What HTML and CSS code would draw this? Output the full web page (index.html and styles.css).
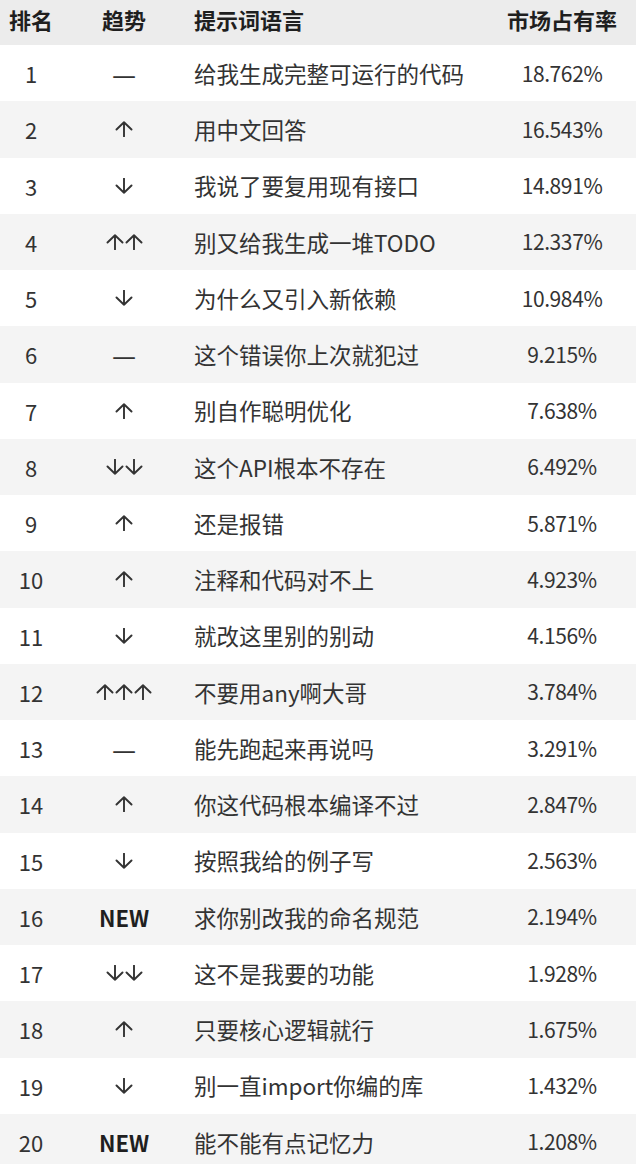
FILE: index.html
```html
<!DOCTYPE html>
<html lang="zh-CN">
<head>
<meta charset="utf-8">
<title>提示词语言排行</title>
<link rel="stylesheet" href="styles.css">
</head>
<body>
<svg width="0" height="0" class="defs">
  <defs>
    <symbol id="up" viewBox="0 0 18 16"><path d="M1.5 8.5 L9 1.2 L16.5 8.5 M9 1.2 V15.5" fill="none" stroke="#333" stroke-width="1.9" stroke-linecap="round" stroke-linejoin="round"/></symbol>
    <symbol id="down" viewBox="0 0 18 16"><path d="M1.5 7.5 L9 14.8 L16.5 7.5 M9 14.8 V0.5" fill="none" stroke="#333" stroke-width="1.9" stroke-linecap="round" stroke-linejoin="round"/></symbol>
  </defs>
</svg>
<div class="table">
  <div class="row head">
    <div class="c rank">排名</div>
    <div class="c trend">趋势</div>
    <div class="c prompt">提示词语言</div>
    <div class="c share">市场占有率</div>
  </div>
  <div class="row odd"><div class="c rank">1</div><div class="c trend"><span class="dash">—</span></div><div class="c prompt">给我生成完整可运行的代码</div><div class="c share">18.762%</div></div>
  <div class="row even"><div class="c rank">2</div><div class="c trend"><svg class="ar"><use href="#up"/></svg></div><div class="c prompt">用中文回答</div><div class="c share">16.543%</div></div>
  <div class="row odd"><div class="c rank">3</div><div class="c trend"><svg class="ar"><use href="#down"/></svg></div><div class="c prompt">我说了要复用现有接口</div><div class="c share">14.891%</div></div>
  <div class="row even"><div class="c rank">4</div><div class="c trend"><svg class="ar"><use href="#up"/></svg><svg class="ar"><use href="#up"/></svg></div><div class="c prompt">别又给我生成一堆TODO</div><div class="c share">12.337%</div></div>
  <div class="row odd"><div class="c rank">5</div><div class="c trend"><svg class="ar"><use href="#down"/></svg></div><div class="c prompt">为什么又引入新依赖</div><div class="c share">10.984%</div></div>
  <div class="row even"><div class="c rank">6</div><div class="c trend"><span class="dash">—</span></div><div class="c prompt">这个错误你上次就犯过</div><div class="c share">9.215%</div></div>
  <div class="row odd"><div class="c rank">7</div><div class="c trend"><svg class="ar"><use href="#up"/></svg></div><div class="c prompt">别自作聪明优化</div><div class="c share">7.638%</div></div>
  <div class="row even"><div class="c rank">8</div><div class="c trend"><svg class="ar"><use href="#down"/></svg><svg class="ar"><use href="#down"/></svg></div><div class="c prompt">这个API根本不存在</div><div class="c share">6.492%</div></div>
  <div class="row odd"><div class="c rank">9</div><div class="c trend"><svg class="ar"><use href="#up"/></svg></div><div class="c prompt">还是报错</div><div class="c share">5.871%</div></div>
  <div class="row even"><div class="c rank">10</div><div class="c trend"><svg class="ar"><use href="#up"/></svg></div><div class="c prompt">注释和代码对不上</div><div class="c share">4.923%</div></div>
  <div class="row odd"><div class="c rank">11</div><div class="c trend"><svg class="ar"><use href="#down"/></svg></div><div class="c prompt">就改这里别的别动</div><div class="c share">4.156%</div></div>
  <div class="row even"><div class="c rank">12</div><div class="c trend"><svg class="ar"><use href="#up"/></svg><svg class="ar"><use href="#up"/></svg><svg class="ar"><use href="#up"/></svg></div><div class="c prompt">不要用any啊大哥</div><div class="c share">3.784%</div></div>
  <div class="row odd"><div class="c rank">13</div><div class="c trend"><span class="dash">—</span></div><div class="c prompt">能先跑起来再说吗</div><div class="c share">3.291%</div></div>
  <div class="row even"><div class="c rank">14</div><div class="c trend"><svg class="ar"><use href="#up"/></svg></div><div class="c prompt">你这代码根本编译不过</div><div class="c share">2.847%</div></div>
  <div class="row odd"><div class="c rank">15</div><div class="c trend"><svg class="ar"><use href="#down"/></svg></div><div class="c prompt">按照我给的例子写</div><div class="c share">2.563%</div></div>
  <div class="row even"><div class="c rank">16</div><div class="c trend"><span class="new">NEW</span></div><div class="c prompt">求你别改我的命名规范</div><div class="c share">2.194%</div></div>
  <div class="row odd"><div class="c rank">17</div><div class="c trend"><svg class="ar"><use href="#down"/></svg><svg class="ar"><use href="#down"/></svg></div><div class="c prompt">这不是我要的功能</div><div class="c share">1.928%</div></div>
  <div class="row even"><div class="c rank">18</div><div class="c trend"><svg class="ar"><use href="#up"/></svg></div><div class="c prompt">只要核心逻辑就行</div><div class="c share">1.675%</div></div>
  <div class="row odd"><div class="c rank">19</div><div class="c trend"><svg class="ar"><use href="#down"/></svg></div><div class="c prompt">别一直import你编的库</div><div class="c share">1.432%</div></div>
  <div class="row even"><div class="c rank">20</div><div class="c trend"><span class="new">NEW</span></div><div class="c prompt">能不能有点记忆力</div><div class="c share">1.208%</div></div>
</div>
</body>
</html>
```
FILE: styles.css
```css
html, body {
  margin: 0;
  padding: 0;
  background: #ffffff;
}
body {
  font-family: "Noto Sans CJK SC", "Noto Sans", sans-serif;
  color: #333333;
  overflow: hidden;
}
.defs {
  position: absolute;
  width: 0;
  height: 0;
}
.table {
  display: flex;
  flex-direction: column;
  width: 636px;
}
.row {
  display: grid;
  grid-template-columns: 62px 124px 1fr 148px;
  align-items: center;
  height: 56.25px;
  font-size: 22.5px;
}
.row.head {
  height: 45px;
  background: #ececec;
  color: #1f1f1f;
  font-size: 22px;
  font-weight: 700;
  padding-bottom: 8px;
  box-sizing: border-box;
}
.row.odd { background: #ffffff; }
.row.even { background: #f4f4f4; }
.c {
  line-height: 1;
}
.rank, .trend, .share {
  text-align: center;
}
.row:not(.head) .share {
  font-size: 21px;
  letter-spacing: -0.4px;
}
.row:not(.head) .rank {
  font-size: 22px;
}
.trend {
  display: flex;
  justify-content: center;
  align-items: center;
}
.prompt {
  padding-left: 8px;
  white-space: nowrap;
}
.ar {
  width: 18px;
  height: 16px;
  margin: 0 0.5px;
}
.dash {
  font-size: 27px;
}
.new {
  font-weight: 700;
  font-size: 22px;
  color: #1f1f1f;
}
```
